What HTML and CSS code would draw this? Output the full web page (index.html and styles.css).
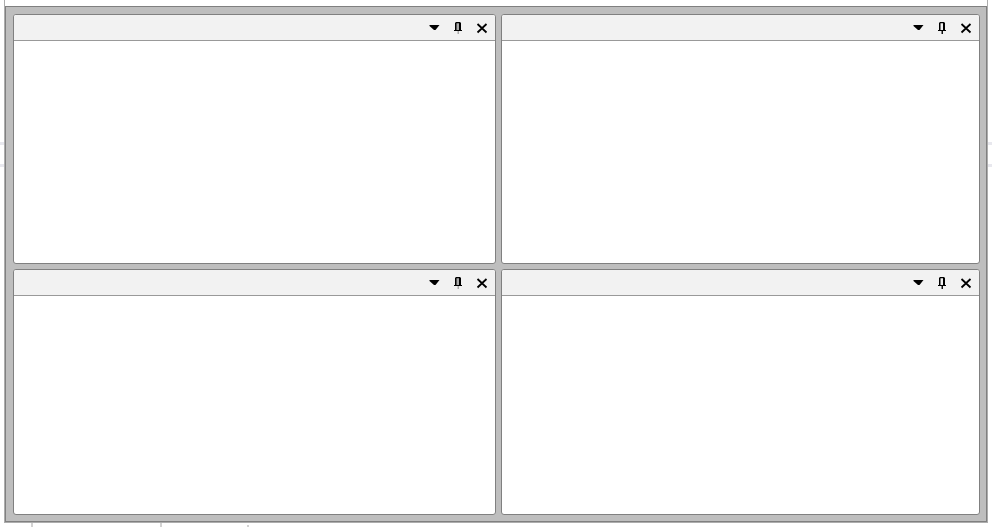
FILE: index.html
```
<!DOCTYPE html>
<html lang="en">
<head>
  <meta charset="UTF-8" />
  <title>Dock Panels</title>
  <link rel="stylesheet" href="styles.css">
</head>
<body>

  <svg class="icons" aria-hidden="true">
    <symbol id="icon-menu" viewBox="0 0 12 12">
      <path d="M1.500 3h10L7.500 8h-1.500L1.500 4z" />
    </symbol>
    <symbol id="icon-pin" viewBox="0 0 12 12">
      <path class="head" d="M4 1h4v7h-4z" />
      <path d="M4 0h4l1 1v7h1v1h-8v-1h1v-7zM4.500 1.200v6.800h2.500v-6.800z" fill-rule="evenodd" />
      <path class="needle" d="M5.500 9h1.500v3h-1.500z" />
    </symbol>
    <symbol id="icon-close" viewBox="0 0 12 12">
      <path d="M1.500 2l9 8.500M10.500 2l-9 8.500" fill="none" stroke="currentColor" stroke-width="1.800" />
    </symbol>
  </svg>

  <div class="window">
    <main class="dock">
      <section class="panel">
        <header class="panel-header">
          <button class="tool" aria-label="Menu"><svg><use href="#icon-menu" /></svg></button>
          <button class="tool pin-light" aria-label="Pin"><svg><use href="#icon-pin" /></svg></button>
          <button class="tool" aria-label="Close"><svg><use href="#icon-close" /></svg></button>
        </header>
      </section>

      <section class="panel">
        <header class="panel-header">
          <button class="tool" aria-label="Menu"><svg><use href="#icon-menu" /></svg></button>
          <button class="tool" aria-label="Pin"><svg><use href="#icon-pin" /></svg></button>
          <button class="tool" aria-label="Close"><svg><use href="#icon-close" /></svg></button>
        </header>
      </section>

      <section class="panel">
        <header class="panel-header">
          <button class="tool" aria-label="Menu"><svg><use href="#icon-menu" /></svg></button>
          <button class="tool pin-light" aria-label="Pin"><svg><use href="#icon-pin" /></svg></button>
          <button class="tool" aria-label="Close"><svg><use href="#icon-close" /></svg></button>
        </header>
      </section>

      <section class="panel">
        <header class="panel-header">
          <button class="tool" aria-label="Menu"><svg><use href="#icon-menu" /></svg></button>
          <button class="tool" aria-label="Pin"><svg><use href="#icon-pin" /></svg></button>
          <button class="tool" aria-label="Close"><svg><use href="#icon-close" /></svg></button>
        </header>
      </section>
    </main>
  </div>

</body>
</html>
```

FILE: styles.css
```
:root {
  --frame: #bebebe;
  --line: #808080;
  --edge: #adadad;
  --header: #f2f2f2;
  --mark: #e8e8ee;
  --tick: #d2d2d2;
}

* {
  box-sizing: border-box;
}

/* the marks show in the margins around the window */
body {
  margin: 0;
  padding: 0 4px 4px;
  height: 100vh;
  display: flex;
  background:
    linear-gradient(var(--tick), var(--tick)) 31px 100% / 2px 4px no-repeat,
    linear-gradient(var(--tick), var(--tick)) 160px 100% / 2px 4px no-repeat,
    linear-gradient(var(--tick), var(--tick)) 247px 100% / 2px 2px no-repeat,
    linear-gradient(var(--mark), var(--mark)) 0 142px / 100% 3px no-repeat,
    linear-gradient(var(--mark), var(--mark)) 0 164px / 100% 3px no-repeat,
    #fff;
}

.icons {
  position: absolute;
  width: 0;
  height: 0;
}

.window {
  flex: 1;
  display: flex;
  padding-top: 6px;
  background: #fff;
  border: 1px solid var(--edge);
  border-top: none;
}

.dock {
  flex: 1;
  display: grid;
  grid-template-columns: 483fr 479fr;
  grid-template-rows: 250fr 246fr;
  gap: 5px;
  padding: 7px 6px 6px 7px;
  background: var(--frame);
  border: 1px solid var(--line);
}

.panel {
  background: #fff;
  border: 1px solid var(--line);
  border-radius: 3px;
  overflow: hidden;
}

.panel-header {
  display: flex;
  align-items: center;
  justify-content: flex-end;
  height: 26px;
  padding-right: 1px;
  background: var(--header);
  border-bottom: 1px solid #999;
}

.tool {
  display: flex;
  align-items: center;
  justify-content: center;
  width: 24px;
  height: 24px;
  padding: 0;
  border: none;
  background: none;
  color: #000;
  cursor: pointer;
}

.tool:hover {
  background: #ddd;
}

.tool svg {
  width: 12px;
  height: 12px;
  fill: currentColor;
}

.head {
  fill: var(--head, none);
}

.needle {
  fill: var(--needle, #111);
}

.pin-light {
  --head: #aaa;
  --needle: #aaa;
}
```
